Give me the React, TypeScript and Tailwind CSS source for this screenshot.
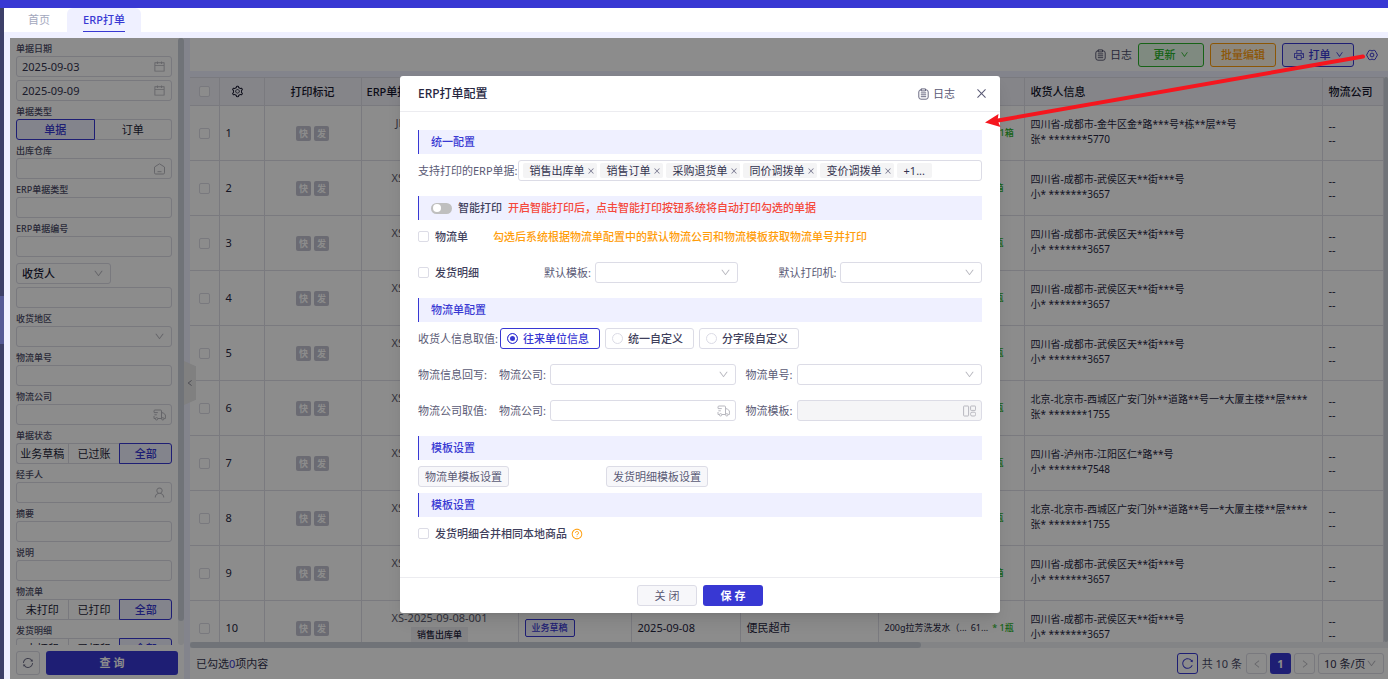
import React from 'react';
import {
  AiOutlineCalendar,
  AiOutlineClose,
  AiOutlineDown,
  AiOutlineLeft,
  AiOutlinePrinter,
  AiOutlineQuestionCircle,
  AiOutlineReload,
  AiOutlineRight,
  AiOutlineSetting,
  AiOutlineSync,
  AiOutlineUser,
} from 'react-icons/ai';

const LogIcon = () => (
  <svg width="11" height="12" viewBox="0 0 11 12" fill="none" stroke="currentColor" strokeWidth="0.9" strokeLinecap="round">
    <path d="M3.4 1.8H3A2.2 2.2 0 0 0 .8 4v5A2.2 2.2 0 0 0 3 11.200h5A2.200 2.200 0 0 0 10.200 9V4A2.200 2.200 0 0 0 8 1.800h-.4" />
    <path d="M3.500 .9h4v2h-4zM3.200 4.900h4.600M3.200 6.800h4.600M3.200 8.700h4.600" />
  </svg>
);

const WarehouseIcon = () => (
  <svg width="13" height="12" viewBox="0 0 13 12" fill="none" stroke="currentColor" strokeLinejoin="round">
    <path d="M1.5 4 6.5.8 11.5 4v5.8a1.2 1.2 0 0 1-1.2 1.2H2.7a1.2 1.2 0 0 1-1.2-1.2zM4.5 8.7h4" />
  </svg>
);

const TruckIcon = () => (
  <svg width="13" height="12" viewBox="0 0 13 12" fill="none" stroke="currentColor" strokeLinejoin="round">
    <path d="M1 3V2a1 1 0 0 1 1-1h5.5a1 1 0 0 1 1 1v7.500H5M1 7v2.500h1.200M8.500 3.800h1.800L12.400 6v3.500h-1.200M.8 3.600h4M1.400 5.800h2.400" />
    <circle cx="3.6" cy="9.8" r="1.2" />
    <circle cx="9.8" cy="9.8" r="1.2" />
  </svg>
);

const TemplateIcon = () => (
  <svg width="13" height="12" viewBox="0 0 13 12" fill="none" stroke="currentColor">
    <rect x=".6" y="1" width="5" height="10" rx=".6" />
    <rect x="7.6" y="1" width="5" height="4.4" rx=".6" />
    <rect x="7.6" y="7.2" width="5" height="3.8" rx="1.4" />
  </svg>
);

const ConfigIcon = () => (
  <svg width="12" height="12" viewBox="0 0 12 12" fill="none" stroke="currentColor" strokeLinejoin="round">
    <path d="M3.2 1.4h1.4l1.4.5 1.4-.5h1.4L10.2 3.6 11.4 6l-1.2 2.4-1.4 2.2H7.4L6 10.1l-1.4.5H3.2L1.8 8.4.6 6l1.2-2.4z" />
    <circle cx="6" cy="6" r="1.9" />
  </svg>
);

type FieldProps = { label: string; icon?: React.ReactNode; value?: string; disabled?: boolean };

const TextField: React.FC<FieldProps> = ({ label, icon, value, disabled }) => (
  <div
    className={`flex h-[21px] min-w-0 flex-1 items-center rounded-[3px] border border-[#dcdce6] px-[5px] ${disabled ? 'bg-[#f5f5f7]' : 'bg-white'}`}
  >
    <input
      aria-label={label}
      defaultValue={value}
      disabled={disabled}
      className="w-full min-w-0 flex-1 bg-transparent text-[#33334f] outline-none"
    />
    {icon && <span className="shrink-0 text-[#b8b8bf]">{icon}</span>}
  </div>
);

const SelectField: React.FC<{ label: string; value?: string }> = ({ label, value = '' }) => (
  <div className="flex h-[21px] min-w-0 flex-1 items-center rounded-[3px] border border-[#dcdce6] bg-white px-[5px]">
    <select aria-label={label} defaultValue={value} className="w-full min-w-0 flex-1 appearance-none bg-transparent outline-none">
      <option value={value}>{value}</option>
    </select>
    <AiOutlineDown size={11} className="mr-px shrink-0 text-[#b8b8bf]" />
  </div>
);

const Field: React.FC<{ label: string; children: React.ReactNode }> = ({ label, children }) => (
  <div className="pt-[3px]">
    <div className="text-[9px] leading-[15px] font-medium text-[#4c4c68]">{label}</div>
    <div className="flex">{children}</div>
  </div>
);

const Segmented: React.FC<{ options: string[]; active: number }> = ({ options, active }) => (
  <div className="flex h-[21px] flex-1">
    {options.map((option, i) => (
      <button
        key={option}
        className={`flex-1 border whitespace-nowrap first:rounded-l-[3px] last:rounded-r-[3px] ${
          i === active ? 'border-[#3838d3] bg-[#eff0ff] font-medium text-[#3838d3]' : 'border-[#dcdce6] text-[#1d1d38]'
        } ${i < active ? 'border-r-0' : ''} ${i > active ? 'border-l-0' : ''}`}
      >
        {option}
      </button>
    ))}
  </div>
);

const Sidebar = () => (
  <aside className="flex w-[174px] shrink-0 flex-col bg-white">
    <div className="flex min-h-0 flex-1">
      <div className="min-h-0 flex-1 overflow-hidden px-1.5">
        <Field label="单据日期">
          <TextField label="开始日期" value="2025-09-03" icon={<AiOutlineCalendar size={13} />} />
        </Field>
        <div className="mt-[3px] flex">
          <TextField label="结束日期" value="2025-09-09" icon={<AiOutlineCalendar size={13} />} />
        </div>
        <Field label="单据类型">
          <Segmented options={['单据', '订单']} active={0} />
        </Field>
        <Field label="出库仓库">
          <TextField label="出库仓库" icon={<WarehouseIcon />} />
        </Field>
        <Field label="ERP单据类型">
          <TextField label="ERP单据类型" />
        </Field>
        <Field label="ERP单据编号">
          <TextField label="ERP单据编号" />
        </Field>
        <div className="mt-1.5 flex w-[95px] font-medium text-[#1d1d38]">
          <SelectField label="收货人类型" value="收货人" />
        </div>
        <div className="mt-[3px] flex">
          <TextField label="收货人" />
        </div>
        <Field label="收货地区">
          <SelectField label="收货地区" />
        </Field>
        <Field label="物流单号">
          <TextField label="物流单号" />
        </Field>
        <Field label="物流公司">
          <TextField label="物流公司" icon={<TruckIcon />} />
        </Field>
        <Field label="单据状态">
          <Segmented options={['业务草稿', '已过账', '全部']} active={2} />
        </Field>
        <Field label="经手人">
          <TextField label="经手人" icon={<AiOutlineUser size={13} />} />
        </Field>
        <Field label="摘要">
          <TextField label="摘要" />
        </Field>
        <Field label="说明">
          <TextField label="说明" />
        </Field>
        <Field label="物流单">
          <Segmented options={['未打印', '已打印', '全部']} active={2} />
        </Field>
        <Field label="发货明细">
          <Segmented options={['未打印', '已打印', '全部']} active={2} />
        </Field>
      </div>
      <div className="w-1.5 rounded-full bg-[#eef0f5]">
        <div className="h-[96%] rounded-full bg-[#ccd2da]" />
      </div>
    </div>
    <div className="flex h-[34px] shrink-0 items-center gap-1.5 px-1.5 pt-0.5">
      <button aria-label="重置" className="flex h-6 w-6 items-center justify-center rounded-[3px] border border-[#dcdce6] text-[#6b6b85]">
        <AiOutlineSync size={12} />
      </button>
      <button className="h-6 flex-1 rounded-[3px] bg-[#3838d3] font-bold text-white">查 询</button>
    </div>
  </aside>
);

const SICHUAN = '四川省-成都市-武侯区天**街***号';
const BEIJING = '北京-北京市-西城区广安门外**道路**号一*大厦主楼**层****';

const ROWS = [
  { no: 'JH-2025-09-08-01', code: '61...', qty: '* 1箱', address: '四川省-成都市-金牛区金*路***号*栋**层**号', contact: '张* *******5770' },
  { no: 'XS-2025-09-08-009', code: '...', qty: '* 1箱', address: SICHUAN, contact: '小* *******3657' },
  { no: 'XS-2025-09-08-008', code: '...', qty: '* 1瓶', address: SICHUAN, contact: '小* *******3657' },
  { no: 'XS-2025-09-08-007', code: '...', qty: '* 1瓶', address: SICHUAN, contact: '小* *******3657' },
  { no: 'XS-2025-09-08-006', code: '...', qty: '* 1瓶', address: SICHUAN, contact: '小* *******3657' },
  { no: 'XS-2025-09-08-005', code: '...', qty: '* 1瓶', address: BEIJING, contact: '张* *******1755' },
  { no: 'XS-2025-09-08-004', code: '...', qty: '* 1瓶', address: '四川省-泸州市-江阳区仁*路**号', contact: '小* *******7548' },
  { no: 'XS-2025-09-08-003', code: '...', qty: '* 1瓶', address: BEIJING, contact: '张* *******1755' },
  { no: 'XS-2025-09-08-002', code: '...', qty: '* 1箱', address: SICHUAN, contact: '小* *******3657' },
  { no: 'XS-2025-09-08-001', code: '61...', qty: '* 1瓶', address: SICHUAN, contact: '小* *******3657' },
];

const CheckBox: React.FC<{ label?: string; id?: string }> = ({ label, id }) => (
  <input
    type="checkbox"
    id={id}
    aria-label={label}
    className="block h-[11px] w-[11px] shrink-0 appearance-none rounded-[2px] border border-[#dcdce6] bg-white"
  />
);

const OrderTable = () => (
  <table className="w-full table-fixed border-collapse text-left text-[#26263f]">
    <colgroup>
      <col className="w-[29px]" />
      <col className="w-[45px]" />
      <col className="w-[97px]" />
      <col className="w-[157px]" />
      <col className="w-[113px]" />
      <col className="w-[109px]" />
      <col className="w-[138px]" />
      <col className="w-[146px]" />
      <col className="w-[298px]" />
      <col />
    </colgroup>
    <thead>
      <tr className="h-7 border-y border-[#dfdfe8] bg-[#f2f3fa] text-[#15152c] *:border-r *:border-[#dfdfe8] *:font-medium">
        <th className="pl-[9px]">
          <CheckBox label="全选" />
        </th>
        <th>
          <AiOutlineSetting size={13} className="ml-[11px]" />
        </th>
        <th className="text-center">打印标记</th>
        <th className="pl-[5px]">ERP单据编号</th>
        <th className="pl-1.5">单据状态</th>
        <th className="pl-1.5">单据日期</th>
        <th className="pl-1.5">往来单位</th>
        <th className="pl-1.5">商品信息</th>
        <th className="pl-1.5">收货人信息</th>
        <th className="pl-1.5">物流公司</th>
      </tr>
    </thead>
    <tbody>
      {ROWS.map((row, i) => (
        <tr key={row.no} className="h-[55px] border-b border-[#dfdfe8] bg-white whitespace-nowrap *:border-r *:border-[#dfdfe8]">
          <td className="pl-[9px]">
            <CheckBox label={`选择第${i + 1}行`} />
          </td>
          <td className="pl-1.5">{i + 1}</td>
          <td>
            <div className="flex justify-center gap-[3px] text-[9px] leading-[15px] font-bold text-white">
              <span className="w-[15px] rounded-[2px] bg-[#c3c3d1] text-center">快</span>
              <span className="w-[15px] rounded-[2px] bg-[#c3c3d1] text-center">发</span>
            </div>
          </td>
          <td className="pb-[3px] text-center leading-4">
            <div className="text-[#5c5c70]">{row.no}</div>
            <span className="inline-block bg-[#efeff3] px-1.5 text-[9px] font-medium">销售出库单</span>
          </td>
          <td className="pl-1.5">
            <span className="inline-block rounded-[2px] border border-[#3838d3] bg-[#eff0ff] px-1.5 text-[9px] leading-4 font-medium text-[#3838d3]">
              业务草稿
            </span>
          </td>
          <td className="pl-1.5">2025-09-08</td>
          <td className="pl-1.5">便民超市</td>
          <td className="pl-1.5">
            <div className="flex gap-1 text-[9px]">
              <span>200g拉芳洗发水（...</span>
              <span>{row.code}</span>
              <span className="font-medium text-[#2bb52b]">{row.qty}</span>
            </div>
          </td>
          <td className="pb-[3px] pl-1.5 text-[10px] leading-[15px]">
            {row.address}
            <br />
            {row.contact}
          </td>
          <td className="pl-1.5 leading-[14px]">
            --
            <br />
            --
          </td>
        </tr>
      ))}
    </tbody>
  </table>
);

const Toolbar = () => (
  <div className="flex h-[33px] shrink-0 items-center justify-end gap-1.5 bg-white pr-[10px]">
    <button className="flex items-center gap-1 text-[#4c4c68]">
      <LogIcon />
      日志
    </button>
    <button className="flex h-6 w-[66px] items-center justify-center gap-1 rounded-[3px] border border-[#2bb52b] bg-[#e8fbe9] font-medium text-[#2bb52b]">
      更新
      <AiOutlineDown size={9} />
    </button>
    <button className="h-6 w-[66px] rounded-[3px] border border-[#ff9d0a] bg-[#fff6e3] font-medium text-[#ff9d0a]">批量编辑</button>
    <button className="flex h-6 w-[72px] items-center justify-center gap-1 rounded-[3px] border border-[#3838d3] bg-[#eff0ff] font-medium text-[#3838d3]">
      <AiOutlinePrinter size={12} />
      打单
      <AiOutlineDown size={9} />
    </button>
    <button aria-label="打单配置" className="ml-1.5 text-[#3838d3]">
      <ConfigIcon />
    </button>
  </div>
);

const Pagination = () => (
  <div className="flex h-[31px] shrink-0 items-center gap-[3px] bg-white px-1.5 pr-1 text-[#33334f]">
    <div className="flex-1">
      已勾选<span className="text-[#3838d3]">0</span>项内容
    </div>
    <button aria-label="刷新" className="flex h-[21px] w-[21px] items-center justify-center rounded-[3px] border border-[#3838d3] text-[#3838d3]">
      <AiOutlineReload size={13} />
    </button>
    <span className="mx-px text-[#4c4c68]">共 10 条</span>
    <button aria-label="上一页" className="flex h-[21px] w-[21px] items-center justify-center rounded-[3px] border border-[#dcdce6] text-[#b8b8bf]">
      <AiOutlineLeft size={10} />
    </button>
    <button className="h-[21px] w-[21px] rounded-[3px] bg-[#3838d3] font-bold text-white">1</button>
    <button aria-label="下一页" className="flex h-[21px] w-[21px] items-center justify-center rounded-[3px] border border-[#dcdce6] text-[#b8b8bf]">
      <AiOutlineRight size={10} />
    </button>
    <div className="flex w-[66px]">
      <SelectField label="每页条数" value="10 条/页" />
    </div>
  </div>
);

const SectionBar: React.FC<{ children: React.ReactNode }> = ({ children }) => (
  <h3 className="flex h-6 items-center border-l border-[#3838d3] bg-[#eff0ff] pl-3 font-medium text-[#3838d3]">{children}</h3>
);

const Row: React.FC<{ children: React.ReactNode }> = ({ children }) => (
  <div className="flex h-[21px] items-center whitespace-nowrap text-[#5a5a75]">{children}</div>
);

const Check: React.FC<{ id: string; label: string }> = ({ id, label }) => (
  <span className="flex items-center gap-1.5 font-medium text-[#3f3f5c]">
    <CheckBox id={id} />
    <label htmlFor={id}>{label}</label>
  </span>
);

const TAGS = ['销售出库单', '销售订单', '采购退货单', '同价调拨单', '变价调拨单'];
const SOURCES = ['往来单位信息', '统一自定义', '分字段自定义'];

const ConfigModal = () => (
  <div role="dialog" aria-label="ERP打单配置" className="flex w-[600px] flex-col rounded-[3px] bg-white shadow-lg">
    <header className="flex h-9 items-center border-b border-[#ececf0] pr-3 pl-[18px] text-[#5a5a75]">
      <h2 className="flex-1 text-xs font-medium text-[#26263f]">ERP打单配置</h2>
      <button className="mr-5 flex items-center gap-1">
        <LogIcon />
        日志
      </button>
      <button aria-label="关闭弹窗">
        <AiOutlineClose size={13} />
      </button>
    </header>

    <div className="flex flex-col gap-[15px] px-[18px] pt-[18px] pb-[33px]">
      <div className="flex flex-col gap-1.5">
        <SectionBar>统一配置</SectionBar>
        <Row>
          <span>支持打印的ERP单据:</span>
          <div className="flex h-[21px] flex-1 items-center gap-[3px] rounded-[3px] border border-[#dcdce6] px-1 leading-[15px] text-[#33334f]">
            {TAGS.map((tag) => (
              <span key={tag} className="flex items-center gap-0.5 rounded-[2px] bg-[#f4f4f5] pr-0.5 pl-[7px]">
                {tag}
                <button aria-label={`移除${tag}`} className="text-[#6b6b85]">
                  <AiOutlineClose size={8} />
                </button>
              </span>
            ))}
            <span className="rounded-[2px] bg-[#f4f4f5] px-[7px]">+1...</span>
          </div>
        </Row>
      </div>

      <div className="flex flex-col gap-1.5">
        <SectionBar>
          <button role="switch" aria-checked="false" aria-labelledby="smart" className="flex h-[11px] w-[21px] items-center rounded-full bg-[#bfbfbf] px-0.5">
            <span className="h-2 w-2 rounded-full bg-white" />
          </button>
          <span id="smart" className="mr-1.5 ml-1.5 text-[#3f3f5c]">
            智能打印
          </span>
          <span className="text-[#f5483b]">开启智能打印后，点击智能打印按钮系统将自动打印勾选的单据</span>
        </SectionBar>
        <Row>
          <div className="w-[75px]">
            <Check id="waybill" label="物流单" />
          </div>
          <span className="font-medium text-[#ff9d0a]">勾选后系统根据物流单配置中的默认物流公司和物流模板获取物流单号并打印</span>
        </Row>
      </div>

      <Row>
        <div className="w-[126px]">
          <Check id="detail" label="发货明细" />
        </div>
        <span className="w-[51px]">默认模板:</span>
        <SelectField label="默认模板" />
        <span className="ml-[41px] w-[61px]">默认打印机:</span>
        <SelectField label="默认打印机" />
      </Row>

      <div className="flex flex-col gap-1.5">
        <SectionBar>物流单配置</SectionBar>
        <Row>
          <span className="w-[82px]">收货人信息取值:</span>
          <div className="flex gap-[5px]">
            {SOURCES.map((source, i) => (
              <label
                key={source}
                className={`flex h-[21px] items-center gap-[5px] rounded-[3px] border pr-[10px] pl-1.5 font-medium ${
                  i === 0 ? 'border-[#3838d3] text-[#3838d3]' : 'border-[#dcdce6] text-[#3f3f5c]'
                }`}
              >
                <input
                  type="radio"
                  name="source"
                  defaultChecked={i === 0}
                  className="h-[11px] w-[11px] appearance-none rounded-full border border-[#dcdce6] bg-white checked:border-[#3838d3] checked:bg-[#3838d3] checked:shadow-[inset_0_0_0_2px_#fff]"
                />
                {source}
              </label>
            ))}
          </div>
        </Row>
      </div>

      <Row>
        <span className="w-[81px]">物流信息回写:</span>
        <span className="w-[51px]">物流公司:</span>
        <SelectField label="回写物流公司" />
        <span className="ml-[10px] w-[51px]">物流单号:</span>
        <SelectField label="回写物流单号" />
      </Row>
      <Row>
        <span className="w-[81px]">物流公司取值:</span>
        <span className="w-[51px]">物流公司:</span>
        <TextField label="取值物流公司" icon={<TruckIcon />} />
        <span className="ml-[10px] w-[51px]">物流模板:</span>
        <TextField label="物流模板" icon={<TemplateIcon />} disabled />
      </Row>

      <div className="flex flex-col gap-1.5">
        <SectionBar>模板设置</SectionBar>
        <Row>
          <button className="h-[21px] rounded-[3px] border border-[#dcdce6] bg-[#f7f7fa] px-1.5">物流单模板设置</button>
          <button className="ml-[97px] h-[21px] rounded-[3px] border border-[#dcdce6] bg-[#f7f7fa] px-1.5">发货明细模板设置</button>
        </Row>
        <SectionBar>模板设置</SectionBar>
        <Row>
          <Check id="merge" label="发货明细合并相同本地商品" />
          <AiOutlineQuestionCircle size={12} className="ml-1 text-[#ff9d0a]" />
        </Row>
      </div>
    </div>

    <footer className="flex h-9 items-center justify-center gap-1.5 border-t border-[#ececf0]">
      <button className="h-[21px] w-[60px] rounded-[3px] border border-[#dcdce6] bg-[#f7f7fa] text-[#5a5a75]">关 闭</button>
      <button className="h-[21px] w-[60px] rounded-[3px] bg-[#3838d3] font-bold text-white">保 存</button>
    </footer>
  </div>
);

export default function App() {
  return (
    <div className="relative flex h-screen flex-col overflow-hidden bg-[#eff0ff] font-['Noto_Sans','Noto_Sans_CJK_SC',sans-serif] text-[11px] leading-4">
      <div className="h-2 shrink-0 bg-[#3838d3]" />
      <div className="flex min-h-0 flex-1">
        <div className="flex w-1 shrink-0 flex-col justify-center bg-[#3d4068]">
          <div className="-mt-12 h-12 bg-[#555a96]" />
        </div>
        <div className="flex min-w-0 flex-1 flex-col">
          <nav className="flex h-6 shrink-0 bg-white">
            <a href="#home" className="flex w-[63px] items-center pl-6 text-[#a3a8bd]">
              首页
            </a>
            <a href="#erp" className="flex w-[74px] justify-center rounded-t-md bg-[#eff0ff] font-medium text-[#3838d3]">
              <span className="border-b border-[#3838d3] pt-1">ERP打单</span>
            </a>
          </nav>

          <div className="relative mt-1.5 ml-1.5 flex min-h-0 flex-1">
            <Sidebar />
            <div className="relative w-1.5 shrink-0">
              <button
                aria-label="收起筛选"
                className="absolute top-[323px] left-0 flex h-11 w-3 items-center justify-center bg-[#e9e9ea] text-[#7d7d8a] [clip-path:polygon(0_0,100%_12%,100%_88%,0_100%)]"
              >
                <AiOutlineLeft size={8} />
              </button>
            </div>
            <main className="flex min-w-0 flex-1 flex-col">
              <Toolbar />
              <div className="mt-1.5 flex min-h-0 flex-1">
                <div className="min-w-0 flex-1 overflow-hidden bg-white">
                  <OrderTable />
                </div>
                <div className="w-1 bg-[#eef0f5]">
                  <div className="h-full rounded-full bg-[#ccd2da]" />
                </div>
              </div>
              <div className="h-1.5 shrink-0 bg-[#eef0f5]">
                <div className="h-full w-[61%] rounded-full bg-[#ccd2da]" />
              </div>
              <Pagination />
            </main>

            <div className="absolute inset-0 flex items-start justify-center bg-black/45 pt-[38px] pl-0.5">
              <ConfigModal />
            </div>
          </div>
        </div>
      </div>

      <svg className="pointer-events-none absolute inset-0 h-full w-full">
        <path d="M1363 56.500 L998 120.500" stroke="#f5161e" strokeWidth="4" strokeLinecap="round" />
        <path d="M985 122.500 L998.500 114 L997.500 120.500 L1000.500 127 Z" fill="#f5161e" />
      </svg>
    </div>
  );
}
